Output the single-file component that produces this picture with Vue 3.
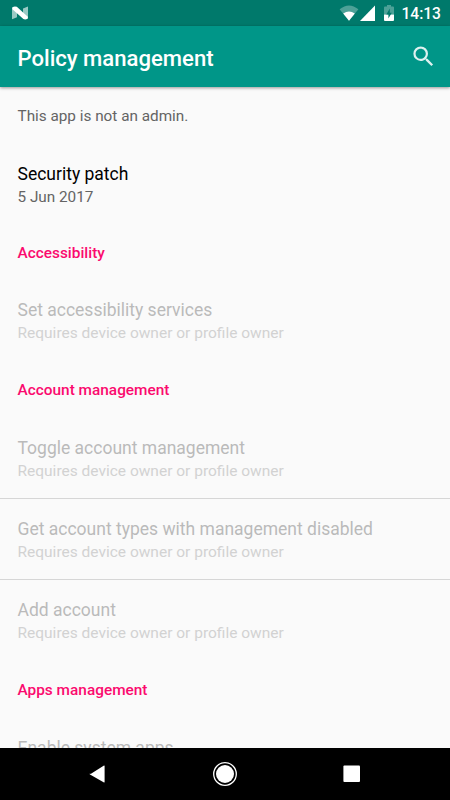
<template>
  <div class="screen">
    <header class="status-bar">
      <svg class="logo" viewBox="0 0 16 14">
        <path d="M0 1.6 5 3.6V11.2L0 13.2ZM16 0.6V12.4L11 10.4V2.6Z" fill="#fff" fill-opacity="0.6" />
        <path d="M.4 1.2Q2.6-.2 4.8.8L15.8 10.8V12.4Q13.6 14 11.4 13L.4 3.2Z" fill="#fff" />
      </svg>
      <div class="status-icons">
        <svg class="wifi" viewBox="0 0 20 16">
          <path d="M10 15.8.6 4.2Q10-3.4 19.4 4.2Z" fill="#fff" fill-opacity="0.3" />
          <path d="M10 15.8 4.2 8.6Q10 4.2 15.8 8.6Z" fill="#fff" />
        </svg>
        <svg class="signal" viewBox="0 0 15 16">
          <path d="M15 .4V16H0Z" fill="#fff" />
        </svg>
        <svg class="battery" viewBox="0 0 10 16">
          <path d="M0 2.4Q0 1.5 1 1.5H3V0H7V1.5H9Q10 1.5 10 2.4V9.6H0Z" fill="#fff" fill-opacity="0.3" />
          <path d="M0 9.6H10V15Q10 16 9 16H1Q0 16 0 15Z" fill="#fff" />
          <path d="M5.8 3.6 2.3 9.6H4.4V13.6L7.8 7.8H5.8Z" fill="#00796b" />
        </svg>
        <span class="clock">14:13</span>
      </div>
    </header>

    <div class="toolbar">
      <h1>Policy management</h1>
      <svg class="search" viewBox="0 0 24 24">
        <path
          fill="#fff"
          fill-opacity="0.87"
          d="M15.5 14h-.79l-.28-.27A6.471 6.471 0 0 0 16 9.5 6.5 6.5 0 1 0 9.5 16c1.61 0 3.09-.59 4.23-1.57l.27.28v.79l5 4.99L20.49 19l-4.99-5zm-6 0C7.01 14 5 11.99 5 9.5S7.01 5 9.5 5 14 7.01 14 9.5 11.99 14 9.5 14z"
        />
      </svg>
    </div>

    <main class="list">
      <div class="note">This app is not an admin.</div>
      <div class="item">
        <div class="title">Security patch</div>
        <div class="summary">5 Jun 2017</div>
      </div>
      <template v-for="group in groups" :key="group.name">
        <h2>{{ group.name }}</h2>
        <div v-for="title in group.items" :key="title" class="item disabled">
          <div class="title">{{ title }}</div>
          <div class="summary">Requires device owner or profile owner</div>
        </div>
      </template>
    </main>

    <nav class="nav-bar">
      <svg viewBox="0 0 24 24">
        <path d="M4.6 12 18 3.5Q18.6 3.2 18.6 3.9V20.1Q18.6 20.8 18 20.5L4 12.6Q3.2 12 4 11.5Z" fill="#fff" />
      </svg>
      <svg viewBox="0 0 24 24">
        <circle cx="12" cy="12" r="11.3" fill="none" stroke="#fff" stroke-width="1.3" />
        <circle cx="12" cy="12" r="9" fill="#fff" />
      </svg>
      <svg viewBox="0 0 24 24">
        <rect x="3.4" y="3.4" width="16.6" height="16.6" rx="1" fill="#fff" />
      </svg>
    </nav>
  </div>
</template>

<script setup>
const groups = [
  { name: 'Accessibility', items: ['Set accessibility services'] },
  {
    name: 'Account management',
    items: ['Toggle account management', 'Get account types with management disabled', 'Add account']
  },
  { name: 'Apps management', items: ['Enable system apps'] }
]
</script>

<style>
body {
  margin: 0;
}
</style>

<style scoped>
.screen {
  display: flex;
  flex-direction: column;
  width: 450px;
  height: 800px;
  overflow: hidden;
  background: #fafafa;
  font-family: Roboto, sans-serif;
}

.status-bar {
  display: flex;
  flex: none;
  align-items: center;
  justify-content: space-between;
  box-sizing: border-box;
  height: 26px;
  padding: 0 9px 0 12px;
  background: #00796b;
}

.logo {
  width: 16px;
  height: 14px;
}

.status-icons {
  display: flex;
  align-items: center;
}

.wifi {
  width: 20px;
  height: 16px;
}

.signal {
  width: 15px;
  height: 16px;
  margin-left: 1px;
}

.battery {
  width: 10px;
  height: 16px;
  margin-left: 9px;
}

.clock {
  margin-left: 7.5px;
  padding-top: 2px;
  color: #fff;
  font-size: 15.6px;
  font-weight: 500;
  line-height: 24px;
}

.toolbar {
  display: flex;
  flex: none;
  z-index: 1;
  align-items: center;
  justify-content: space-between;
  box-sizing: border-box;
  height: 61px;
  padding: 3px 13px 0 17.5px;
  background: #009688;
  box-shadow: 0 1px 3px rgba(0, 0, 0, 0.4);
}

h1 {
  margin: 0;
  color: #fff;
  font-size: 22.1px;
  font-weight: 500;
}

.search {
  width: 27px;
  height: 27px;
  margin-top: -3px;
}

.list {
  flex: 1;
  min-height: 0;
  overflow: hidden;
}

.note {
  box-sizing: border-box;
  height: 54.75px;
  padding: 18.5px 17.5px 0;
  color: #646464;
  font-size: 15.3px;
  line-height: 21px;
}

.item {
  box-sizing: border-box;
  height: 81.25px;
  padding: 19px 17.5px 0;
}

.note + .item {
  padding-top: 20px;
}

.title {
  color: #000;
  font-size: 17.5px;
  line-height: 24px;
}

.summary {
  color: #646464;
  font-size: 15.3px;
  line-height: 22px;
}

.disabled .title {
  color: #bababa;
}

.disabled .summary {
  color: #d2d2d2;
  font-size: 15.5px;
}

.disabled + .disabled {
  border-top: 1px solid #d6d6d6;
  padding-top: 18px;
}

h2 {
  box-sizing: border-box;
  height: 56.25px;
  margin: 0;
  padding: 19.5px 17.5px 0;
  color: #fb0a6e;
  font-size: 15.4px;
  font-weight: 500;
  line-height: 21px;
}

.nav-bar {
  display: flex;
  flex: none;
  align-items: center;
  justify-content: space-between;
  box-sizing: border-box;
  height: 52px;
  padding: 0 86px;
  background: #000;
}

.nav-bar svg {
  width: 24px;
  height: 24px;
}
</style>
